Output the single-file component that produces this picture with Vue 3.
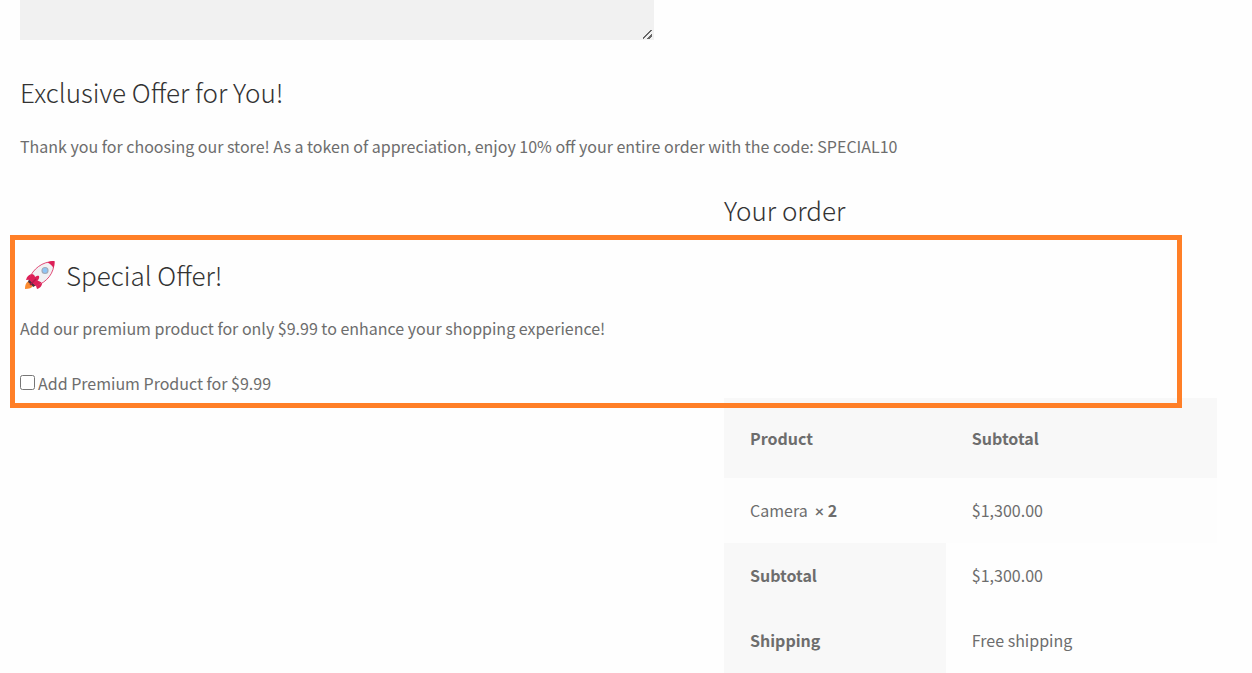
<script setup>
import { ref } from 'vue'

const notes = ref('')
const addPremium = ref(false)
const totals = [
  { label: 'Subtotal', value: '$1,300.00' },
  { label: 'Shipping', value: 'Free shipping' },
]
</script>

<template>
  <main class="checkout">
    <textarea v-model="notes" class="notes" aria-label="Order notes"></textarea>

    <section class="promo">
      <h3>Exclusive Offer for You!</h3>
      <p>Thank you for choosing our store! As a token of appreciation, enjoy 10% off your entire order with the code: SPECIAL10</p>
    </section>

    <h3 class="order-title">Your order</h3>

    <section class="offer">
      <h3 class="offer-title">
        <svg class="rocket" viewBox="0 0 32 32" aria-hidden="true">
          <path d="M5 22 C2 23 1 26 1 30 C5 30 8 29 9.500 26 Z" fill="#fb8b30" />
          <path d="M5 20 L4 23 L9.500 28 L12 26 Z" fill="#4a3040" />
          <path d="M9 15 C5 15 3 17.500 2 21 L7 20.500 Z" fill="#dc1f57" />
          <path d="M18 22.500 C18.500 26 17 28.500 13 30 L11.500 25 Z" fill="#dc1f57" />
          <path d="M5 20 C9 10 18 2.500 30 2.500 C30.500 14 23 23 12 27 Z" fill="#f1f1f3" stroke="#dc1f57" stroke-width="0.800" />
          <path d="M23.500 3.500 C26 2.400 28 2 30.500 2 C30.600 4.500 30.300 6.500 29.500 9 C28 6.500 26 4.800 23.500 3.500 Z" fill="#dc1f57" />
          <path d="M4.500 20.500 C5.500 18 6.500 16.500 8 15 C10 15.500 11 17 11 18 C13 16.500 14 16.500 15 17 C15.500 18.500 15 20 13.500 21.500 C15 22 16.500 23 17.500 23.500 C16 25.300 14 26.500 12 27 Z" fill="#dc1f57" />
          <path d="M6 26 L12 20" stroke="#b5164a" stroke-width="1.500" />
          <circle cx="21" cy="11.500" r="3" fill="#8ec5f5" stroke="#a3aab8" stroke-width="1.200" />
        </svg>
        <span>Special Offer!</span>
      </h3>
      <p>Add our premium product for only $9.99 to enhance your shopping experience!</p>
      <label class="choice">
        <input v-model="addPremium" type="checkbox" />
        <span>Add Premium Product for $9.99</span>
      </label>
    </section>

    <table class="order">
      <thead>
        <tr>
          <th scope="col">Product</th>
          <th scope="col">Subtotal</th>
        </tr>
      </thead>
      <tbody>
        <tr>
          <td>Camera&nbsp; <strong><span class="times">×</span>&nbsp;2</strong></td>
          <td>$1,300.00</td>
        </tr>
      </tbody>
      <tfoot>
        <tr v-for="row in totals" :key="row.label">
          <th scope="row">{{ row.label }}</th>
          <td>{{ row.value }}</td>
        </tr>
      </tfoot>
    </table>
  </main>
</template>

<style>
body {
  margin: 0;
  background: #fefefe;
}
</style>

<style scoped>
.checkout {
  display: flow-root;
  padding: 0 35px 0 20px;
  font-family: "Noto Sans CJK SC", "Noto Sans", sans-serif;
  font-size: 16px;
  line-height: 26px;
  color: #6d6d6d;
}

.notes {
  display: block;
  box-sizing: border-box;
  width: 53%;
  height: 40px;
  padding: 8px;
  border: 0;
  background: #f1f1f1;
  color: inherit;
  font: inherit;
  resize: both;
}

.notes::-webkit-resizer {
  background: linear-gradient(135deg, transparent 5px, #666 5px 7px, transparent 7px 9px, #666 9px 11px, transparent 11px) 4px 5px / 9px 9px no-repeat;
}

h3 {
  margin: 0;
  font-size: 26px;
  font-weight: 300;
  line-height: 32px;
  color: #333;
}

p {
  margin: 0;
}

.promo {
  display: grid;
  gap: 25px;
  padding-top: 36px;
}

.order-title {
  margin-left: calc(100% - 493px);
  padding: 35px 0 9px;
}

.offer {
  position: relative;
  z-index: 1;
  margin: 0 35px 0 -10px;
  padding: 19px 5px 7px;
  border: 5px solid #ff7f27;
}

.offer-title {
  display: flex;
  align-items: center;
  gap: 10px;
  margin-bottom: 24px;
  padding-left: 4px;
}

.rocket {
  width: 32px;
  height: 32px;
  fill: none;
}

.choice {
  display: flex;
  align-items: center;
  gap: 3px;
  width: fit-content;
  margin-top: 29px;
}

.choice input {
  width: 15px;
  height: 15px;
  margin: 0 0 2px;
}

.order {
  width: 493px;
  margin: -10px 0 0 auto;
  border-collapse: collapse;
  table-layout: fixed;
  text-align: left;
}

th,
td {
  padding: 19px 26px 20px;
}

th:first-child,
td:first-child {
  width: 45%;
  box-sizing: border-box;
}

th,
strong {
  font-weight: 700;
}

.times {
  font-family: Lato, sans-serif;
  line-height: 16px;
}

th {
  background: #f8f8f8;
}

thead th {
  padding: 27px 26px;
}

tbody td {
  background: #fdfdfd;
}
</style>
